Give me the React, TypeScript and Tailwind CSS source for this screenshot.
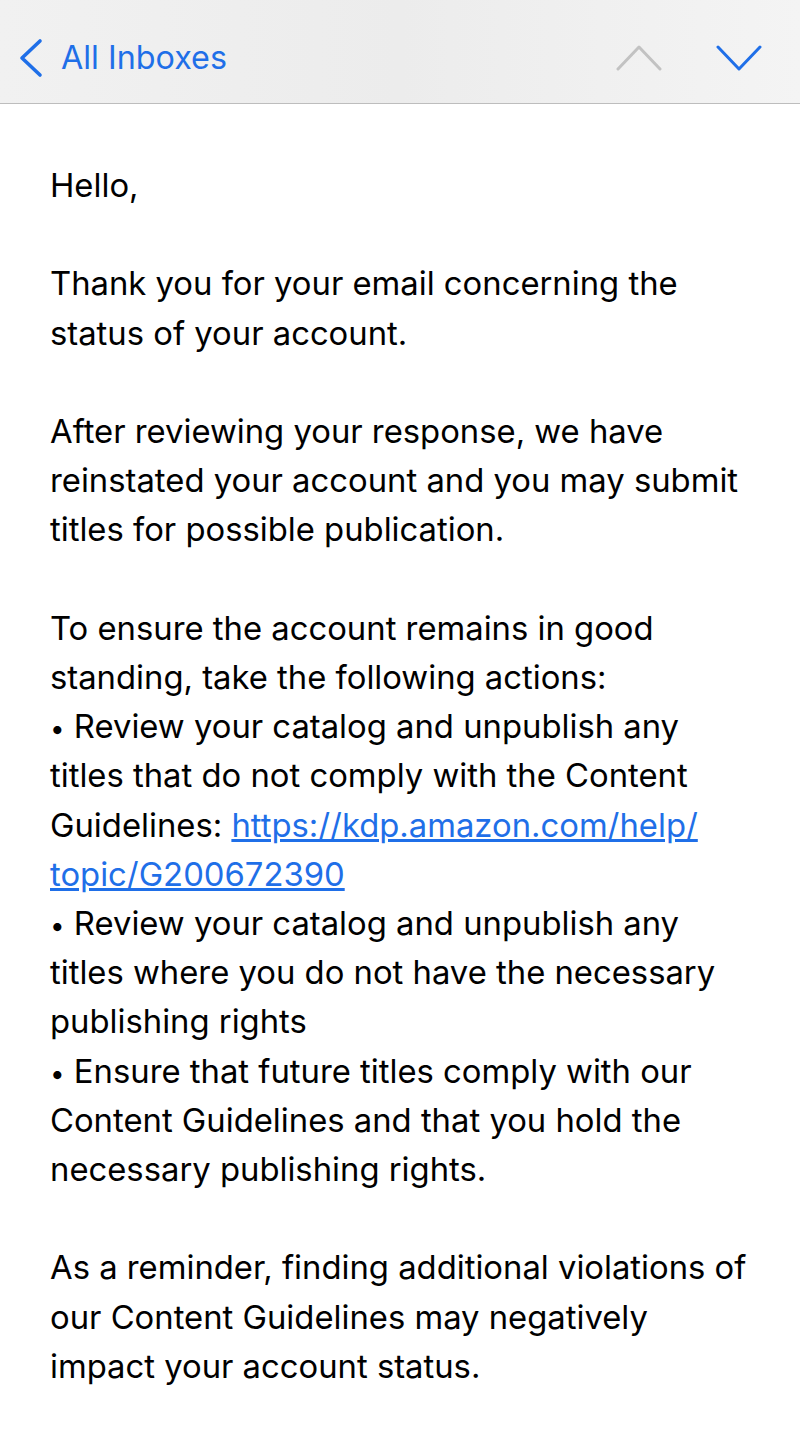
import React from 'react';

const Bullet: React.FC = () => <span className="text-[26px] leading-none">•</span>;

const App: React.FC = () => {
  const blue = 'text-[#1f6fe8]';

  return (
    <div className="w-[800px] min-h-[1433px] bg-white font-['Inter','Liberation_Sans',sans-serif] text-black">
      {/* Navigation bar */}
      <div className="h-[104px] flex items-center bg-gradient-to-r from-[#f1f1f1] via-[#ececec] to-[#f4f4f4] border-b border-[#bdbdbd]">
        <div className="flex items-center pl-[18px] gap-[17px] pt-[13px]">
          <svg width="26" height="40" viewBox="0 0 26 40" fill="none">
            <path d="M22 3 L4 20 L22 37" stroke="#1f6fe8" strokeWidth="3.6" strokeLinecap="round" strokeLinejoin="round" />
          </svg>
          <span className={`text-[32.3px] leading-none ${blue}`}>All Inboxes</span>
        </div>
        <div className="ml-auto flex items-center gap-[54px] pr-[38px] pt-[13px]">
          <svg width="46" height="28" viewBox="0 0 46 28" fill="none">
            <path d="M2 25 L23 3 L44 25" stroke="#c2c2c2" strokeWidth="3" strokeLinecap="round" strokeLinejoin="round" />
          </svg>
          <svg width="46" height="28" viewBox="0 0 46 28" fill="none">
            <path d="M2 3 L23 25 L44 3" stroke="#1f6fe8" strokeWidth="3" strokeLinecap="round" strokeLinejoin="round" />
          </svg>
        </div>
      </div>

      {/* Message body */}
      <div className="pl-[50px] pt-[57px] text-[32.8px] leading-[49.2px]">
        <p>Hello,</p>
        <p>&nbsp;</p>
        <p>Thank you for your email concerning the<br />status of your account.</p>
        <p>&nbsp;</p>
        <p>
          After reviewing your response, we have<br />
          reinstated your account and you may submit<br />
          titles for possible publication.
        </p>
        <p>&nbsp;</p>
        <p>
          To ensure the account remains in good<br />
          standing, take the following actions:<br />
          <Bullet /> Review your catalog and unpublish any<br />
          titles that do not comply with the Content<br />
          Guidelines:{' '}
          <a className={`${blue} underline`} href="#">
            https://kdp.amazon.com/help/
            <br />
            topic/G200672390
          </a>
          <br />
          <Bullet /> Review your catalog and unpublish any<br />
          titles where you do not have the necessary<br />
          publishing rights<br />
          <Bullet /> Ensure that future titles comply with our<br />
          Content Guidelines and that you hold the<br />
          necessary publishing rights.
        </p>
        <p>&nbsp;</p>
        <p>
          As a reminder, finding additional violations of<br />
          our Content Guidelines may negatively<br />
          impact your account status.
        </p>
      </div>
    </div>
  );
};

export default App;
